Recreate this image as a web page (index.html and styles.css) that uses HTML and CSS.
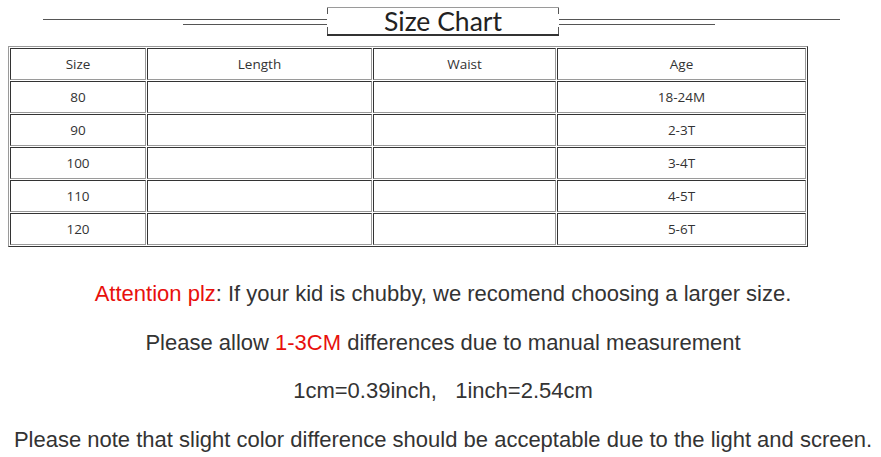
FILE: index.html
```html
<!DOCTYPE html>
<html lang="en">
<head>
<meta charset="utf-8">
<title>Size Chart</title>
<link rel="stylesheet" href="styles.css">
</head>
<body>
<header class="title-bar">
  <div class="deco deco-left">
    <span class="rule rule-long"></span>
    <span class="rule rule-short"></span>
  </div>
  <h1 class="title-box">Size Chart</h1>
  <div class="deco deco-right">
    <span class="rule rule-long"></span>
    <span class="rule rule-short"></span>
  </div>
</header>

<table class="size-table">
  <tr><td class="c-size">Size</td><td class="c-len">Length</td><td class="c-waist">Waist</td><td class="c-age">Age</td></tr>
  <tr><td class="c-size">80</td><td class="c-len"></td><td class="c-waist"></td><td class="c-age">18-24M</td></tr>
  <tr><td class="c-size">90</td><td class="c-len"></td><td class="c-waist"></td><td class="c-age">2-3T</td></tr>
  <tr><td class="c-size">100</td><td class="c-len"></td><td class="c-waist"></td><td class="c-age">3-4T</td></tr>
  <tr><td class="c-size">110</td><td class="c-len"></td><td class="c-waist"></td><td class="c-age">4-5T</td></tr>
  <tr><td class="c-size">120</td><td class="c-len"></td><td class="c-waist"></td><td class="c-age">5-6T</td></tr>
</table>

<div class="notes">
  <p><span class="red">Attention plz</span>: If your kid is chubby, we recomend choosing a larger size.</p>
  <p>Please allow <span class="red">1-3CM</span> differences due to manual measurement</p>
  <p>1cm=0.39inch,&nbsp;&nbsp; 1inch=2.54cm</p>
  <p>Please note that slight color difference should be acceptable due to the light and screen.</p>
</div>
</body>
</html>
```

FILE: styles.css
```css
body {
  margin: 0;
  background: #fff;
  color: #333;
  font-family: "Liberation Sans", Arial, sans-serif;
}

/* Title bar */
.title-bar {
  display: flex;
  height: 46px;
  box-sizing: border-box;
  padding-top: 7px;
  padding-left: 43px;
}
.deco {
  display: flex;
  flex-direction: column;
  gap: 4px;
  padding-top: 12px;
}
.deco-left { width: 284px; }
.deco-right { width: 281px; }
.rule {
  display: block;
  height: 1px;
  background: #555;
}
.deco-left .rule-short { margin-left: 140px; }
.deco-right .rule-short { margin-right: 125px; }

.title-box {
  position: relative;
  margin: 0;
  width: 232px;
  height: 29px;
  box-sizing: border-box;
  border-top: 1px solid #9a9a9a;
  border-bottom: 2px solid #333;
  text-align: center;
  font-family: Lato, "Open Sans", sans-serif;
  font-weight: 400;
  font-size: 26.5px;
  line-height: 26px;
  color: #222;
}
.title-box::before,
.title-box::after {
  content: "";
  position: absolute;
  left: 0;
  right: 0;
  border-left: 1px solid #555;
  border-right: 1px solid #555;
}
.title-box::before { top: 0; height: 6px; }
.title-box::after { bottom: 0; height: 7px; }

/* Table */
.size-table {
  margin-left: 8px;
  width: 800px;
  border-collapse: separate;
  border-spacing: 1px;
  border: 1px solid;
  border-color: #9a9a9a #333 #333 #9a9a9a;
  font-family: "Open Sans", "Noto Sans", sans-serif;
  font-size: 13.5px;
  color: #333;
}
.size-table td {
  box-sizing: border-box;
  height: 32px;
  padding: 0 0 1px;
  text-align: center;
  border: 1px solid;
  border-color: #333 #9a9a9a #9a9a9a #333;
}
.c-size { width: 136px; }
.c-len { width: 225px; }
.c-waist { width: 183px; }
.c-age { width: 249px; }

/* Notes */
.notes {
  margin-top: 23px;
  padding-left: 5px;
  text-align: center;
  font-size: 22px;
  line-height: 48.5px;
}
.notes p { margin: 0; white-space: nowrap; }
.red { color: #e8100c; }
```
